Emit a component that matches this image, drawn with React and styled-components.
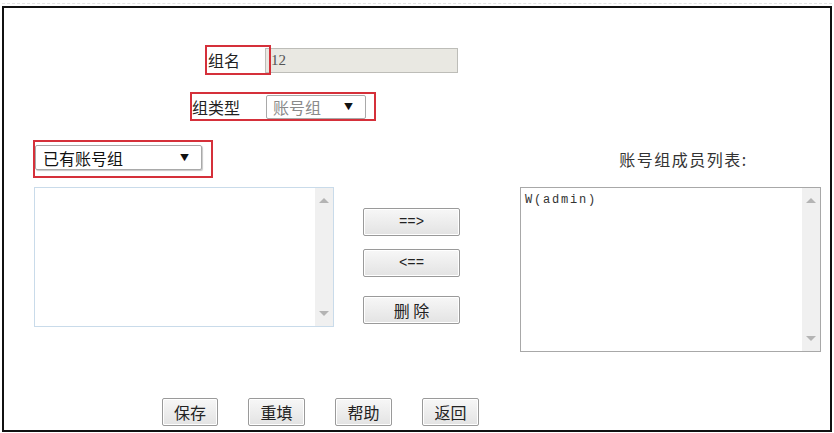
import React from "react";
import styled, { createGlobalStyle } from "styled-components";

const GlobalStyle = createGlobalStyle`
  html, body {
    margin: 0;
    padding: 0;
    background: #ffffff;
  }
  body {
    font-family: "Noto Sans CJK SC", "Noto Sans", sans-serif;
    color: #222;
  }
`;

const Frame = styled.div`
  box-sizing: border-box;
  margin: 6px 0 0 2px;
  width: 830px;
  height: 426px;
  border: 2px solid #111;
  display: flex;
  flex-direction: column;
  position: relative;
`;

const FaintEdge = styled.div`
  position: absolute;
  top: -5px;
  left: -2px;
  right: -2px;
  height: 0;
  border-top: 1px dashed #e4e4e4;
`;

const NameRow = styled.div`
  position: relative;
  margin: 37px 0 0 204px;
  height: 30px;
  display: flex;
  align-items: center;
`;

const Label = styled.span`
  font-size: 16px;
  line-height: 20px;
  color: #222;
  width: ${(p) => p.$w || 57}px;
  white-space: nowrap;
`;

const NameInput = styled.div`
  box-sizing: border-box;
  width: 193px;
  height: 25px;
  border: 1px solid #bdbdb8;
  background: #e9e8e2;
  font-family: "Liberation Serif", serif;
  font-size: 15px;
  color: #555;
  display: flex;
  align-items: center;
  padding-left: 5px;
`;

const Mark = styled.div`
  position: absolute;
  left: -3px;
  top: 0;
  width: 66px;
  height: 30px;
  border: 2px solid #d5303a;
  box-sizing: border-box;
  pointer-events: none;
`;

const TypeRow = styled.div`
  margin: 17px 0 0 186px;
  align-self: flex-start;
  box-sizing: border-box;
  height: 29px;
  border: 2px solid #d5303a;
  display: flex;
  align-items: center;
  padding: 0 8px 0 0;
`;

const Select = styled.div`
  box-sizing: border-box;
  width: ${(p) => p.$w}px;
  height: ${(p) => p.$h || 24}px;
  border: 1px solid #a9a9a9;
  border-radius: 2px;
  background: #fff;
  display: flex;
  align-items: center;
  justify-content: space-between;
  padding: 0 12px 0 ${(p) => p.$pl || 6}px;
  font-size: 16px;
  color: ${(p) => (p.$disabled ? "#8a8a8a" : "#111")};
  box-shadow: ${(p) => (p.$shadow ? "1px 1px 1px #c8c8c8" : "none")};
`;

const Caret = styled.span`
  font-size: 9px;
  color: #111;
  line-height: 1;
`;

const Main = styled.div`
  display: flex;
  margin: 19px 0 0 30px;
`;

const Column = styled.div`
  display: flex;
  flex-direction: column;
  width: ${(p) => p.$w}px;
  margin-left: ${(p) => p.$ml || 0}px;
`;

const ExistingMark = styled.div`
  box-sizing: border-box;
  margin-left: -1px;
  width: 180px;
  height: 38px;
  border: 2px solid #d5303a;
  padding: 3px 0 0 0;
`;

const ListBox = styled.div`
  box-sizing: border-box;
  margin-top: 9px;
  height: ${(p) => p.$h}px;
  border: 1px solid ${(p) => p.$border};
  display: flex;
  background: #fff;
`;

const ListBody = styled.div`
  flex: 1;
  padding: 3px 4px;
  font-family: "Liberation Mono", monospace;
  font-size: 12px;
  letter-spacing: 1.8px;
  color: #333;
  line-height: 18px;
`;

const ScrollTrack = styled.div`
  width: 18px;
  background: #f0f0f0;
  display: flex;
  flex-direction: column;
  justify-content: space-between;
  align-items: center;
  padding: 10px 0 10px;
`;

const Arrow = styled.span`
  width: 0;
  height: 0;
  border-left: 5px solid transparent;
  border-right: 5px solid transparent;
  ${(p) =>
    p.$down
      ? "border-top: 5px solid #b4b4b4;"
      : "border-bottom: 5px solid #b4b4b4;"}
`;

const MidColumn = styled.div`
  display: flex;
  flex-direction: column;
  width: 97px;
  margin-left: 29px;
  padding-top: 68px;
`;

const Button = styled.button`
  box-sizing: border-box;
  width: ${(p) => p.$w || 97}px;
  height: 28px;
  margin-top: ${(p) => p.$mt || 0}px;
  border: 1px solid #9a9a9a;
  border-radius: 2px;
  background: linear-gradient(#f7f7f7, #e3e3e3);
  box-shadow: inset 0 0 0 1px #ffffff;
  font-family: ${(p) =>
    p.$mono ? '"Liberation Mono", monospace' : '"Noto Sans CJK SC", sans-serif'};
  font-size: ${(p) => (p.$mono ? 14 : 16)}px;
  color: #222;
  padding: 0;
  display: flex;
  align-items: center;
  justify-content: center;
  cursor: pointer;
`;

const ListTitle = styled.div`
  height: 38px;
  display: flex;
  align-items: center;
  justify-content: center;
  padding-left: 26px;
  font-size: 16px;
  letter-spacing: 1.5px;
  color: #333;
`;

const Footer = styled.div`
  display: flex;
  gap: 30px;
  margin: 46px 0 0 158px;
`;

export default function App() {
  return (
    <>
      <GlobalStyle />
      <Frame>
        <FaintEdge />
        <NameRow>
          <Label $w={57}>组名</Label>
          <NameInput>12</NameInput>
          <Mark />
        </NameRow>

        <TypeRow>
          <Label $w={74}>组类型</Label>
          <Select $w={100} $disabled $pl={6}>
            账号组
            <Caret>▼</Caret>
          </Select>
        </TypeRow>

        <Main>
          <Column $w={300}>
            <ExistingMark>
              <Select $w={167} $h={25} $pl={7} $shadow>
                已有账号组
                <Caret>▼</Caret>
              </Select>
            </ExistingMark>
            <ListBox $h={140} $border="#c9dbea">
              <ListBody />
              <ScrollTrack>
                <Arrow />
                <Arrow $down />
              </ScrollTrack>
            </ListBox>
          </Column>

          <MidColumn>
            <Button $mono>==&gt;</Button>
            <Button $mono $mt={13}>&lt;==</Button>
            <Button $mt={19}>删&nbsp;除</Button>
          </MidColumn>

          <Column $w={301} $ml={60}>
            <ListTitle>账号组成员列表:</ListTitle>
            <ListBox $h={165} $border="#a8a8a8">
              <ListBody>W(admin)</ListBody>
              <ScrollTrack>
                <Arrow />
                <Arrow $down />
              </ScrollTrack>
            </ListBox>
          </Column>
        </Main>

        <Footer>
          <Button $w={56}>保存</Button>
          <Button $w={57}>重填</Button>
          <Button $w={57}>帮助</Button>
          <Button $w={57}>返回</Button>
        </Footer>
      </Frame>
    </>
  );
}
